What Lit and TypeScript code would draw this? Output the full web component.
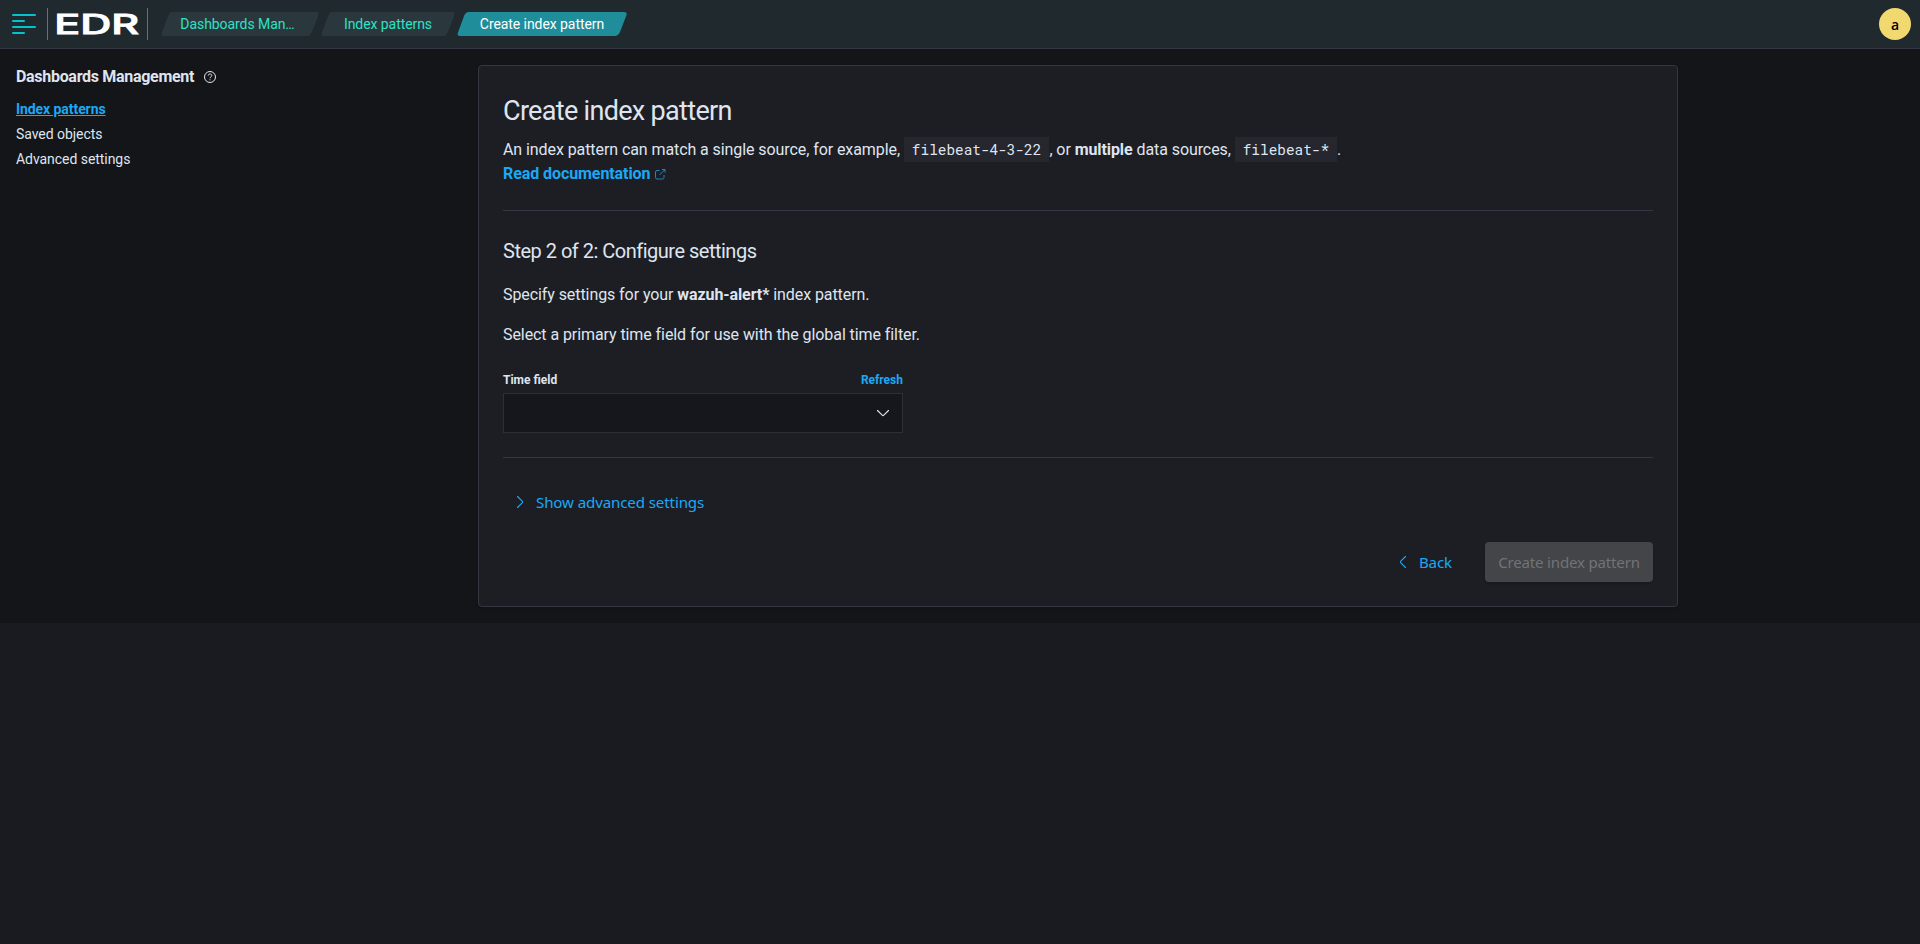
import { LitElement, html, css, svg } from "lit";
import { customElement } from "lit/decorators.js";

const chevron = (d: string) => html`<svg width="16" height="16" viewBox="0 0 16 16" fill="none" stroke="currentColor" stroke-width="1.150" stroke-linecap="round" stroke-linejoin="round">${svg`<path d=${d}></path>`}</svg>`;

@customElement("app-header")
export class AppHeader extends LitElement {
  static styles = css`
    :host { display: flex; align-items: flex-start; height: 48px; border-bottom: 1px solid #343741; background: #1f292e; padding: 0 8px 0 12px; }
    .menu { width: 24px; height: 22px; margin-top: 13px; }
    .logo { box-sizing: border-box; width: 101px; height: 32px; margin: 8px 0 0 11px; border-left: 1px solid #1f8e9c; border-right: 1px solid #1f8e9c; }
    .logo svg { display: block; }
    .crumbs { display: flex; gap: 1px; margin: 12px 0 0 12.500px; }
    .crumb { box-sizing: border-box; position: relative; display: flex; justify-content: center; height: 24px; line-height: 24px; font-size: 14px; color: #2ce2c6; letter-spacing: -0.07px; }
    .crumb svg { position: absolute; inset: 0; }
    .crumb span { position: relative; white-space: nowrap; }
    .c1 { width: 159px; padding-right: 5px; }
    .c2 { width: 135px; }
    .c3 { width: 171px; color: #fff; }
    .avatar { width: 32px; height: 32px; margin: 8px 1px 0 auto; border-radius: 50%; background: #f1d86f; color: #000; text-align: center; font: 600 14px/34px "Open Sans", sans-serif; }
  `;
  private crumb(cls: string, w: number, fill: string, text: string) {
    const d = `M11 0H${w - 4}Q${w - 0.5} 0 ${w - 1.5} 3L${w - 8} 20Q${w - 10} 24 ${w - 13} 24H3Q-.2 24 .8 21L7 4Q8.500 0 12 0Z`;
    return html`<div class="crumb ${cls}"><svg width=${w} height="24"><path d=${d} fill=${fill}></path></svg><span>${text}</span></div>`;
  }
  render() {
    return html`
      <svg class="menu" width="24" height="22" fill="#05c3c8"><rect y="1" width="24" height="2" rx="1"/><rect y="7" width="13" height="2" rx="1"/><rect y="13" width="24" height="2" rx="1"/><rect y="19" width="13" height="2" rx="1"/></svg>
      <div class="logo"><svg width="99" height="32"><text x="6.200" y="25.700" fill="#fff" stroke="#fff" stroke-width=".8" font-family="Inter, sans-serif" font-weight="500" font-size="26.500" textLength="85" lengthAdjust="spacingAndGlyphs">EDR</text></svg></div>
      <nav class="crumbs">
        ${this.crumb("c1", 159, "#2a383e", "Dashboards Man…")}
        ${this.crumb("c2", 135, "#2a383e", "Index patterns")}
        ${this.crumb("c3", 171, "#208d9b", "Create index pattern")}
      </nav>
      <div class="avatar">a</div>`;
  }
}

@customElement("side-nav")
export class SideNav extends LitElement {
  static styles = css`
    :host { display: block; padding-left: 16px; font-size: 14px; letter-spacing: -0.05px; }
    .title { display: flex; align-items: center; gap: 10px; height: 24px; margin-top: 15px; font-size: 16px; font-weight: 700; letter-spacing: -0.3px; white-space: nowrap; }
    .title svg { flex: none; margin-top: 2px; }
    .item { display: block; height: 25px; line-height: 25px; }
    .list { margin-top: 9px; }
    .active { color: #1ba9f5; font-weight: 700; text-decoration: underline; letter-spacing: -0.07px; }
  `;
  render() {
    return html`
      <div class="title"><span>Dashboards Management</span>
        <svg width="12" height="12" viewBox="0 0 12 12" fill="none" stroke="#dfe5ef"><circle cx="6" cy="6" r="5.500"></circle><path d="M4.200 4.600C4.200 2.400 7.800 2.400 7.800 4.500C7.800 5.800 6 5.700 6 7.200M6 8.300V9.300"></path></svg>
      </div>
      <div class="list">
        <a class="item active">Index patterns</a>
        <a class="item">Saved objects</a>
        <a class="item">Advanced settings</a>
      </div>`;
  }
}

@customElement("pattern-panel")
export class PatternPanel extends LitElement {
  static styles = css`
    :host { display: block; box-sizing: border-box; width: 1200px; height: 542px; padding: 24px; border: 1px solid #343741; border-radius: 4px; background: #1d1e24; font-size: 16px; line-height: 24px; letter-spacing: -0.08px; box-shadow: 0 2px 3px rgba(0,0,0,.15); }
    h1 { margin: 0; padding-top: 1px; font-size: 27px; font-weight: 400; line-height: 40px; letter-spacing: -0.68px; }
    h2 { margin: 0; font-size: 20px; font-weight: 400; line-height: 32px; letter-spacing: -0.5px; }
    p { margin: 16px 0 0; }
    p.intro { margin-top: 7px; }
    code { font: 14.4px "Roboto Mono", "Liberation Mono", monospace; letter-spacing: 0; background: #25262e; padding: 3.200px 8px; white-space: pre; }
    .link { color: #1ba9f5; font-weight: 700; }
    .doc { display: flex; align-items: center; gap: 5px; }
    .rule { height: 1px; margin: 24px 0; background: #343741; }
    .form { width: 400px; margin-top: 24px; }
    .row { display: flex; justify-content: space-between; font-size: 12px; font-weight: 700; line-height: 18px; letter-spacing: 0; }
    .select { box-sizing: border-box; display: flex; align-items: center; justify-content: flex-end; height: 40px; margin-top: 4px; padding-right: 11px; border: 1px solid #2d2f36; background: #16171c; }
    .seg { font-family: "Noto Sans", sans-serif; font-size: 15.100px; letter-spacing: -0.12px; color: #1ba9f5; }
    .adv { display: flex; align-items: center; gap: 8px; height: 40px; padding-left: 9px; }
    .actions { display: flex; justify-content: flex-end; align-items: center; height: 40px; margin-top: 20px; }
    .back { display: flex; align-items: center; gap: 8px; margin-right: 33px; }
    .btn { width: 168px; height: 40px; line-height: 40px; text-align: center; border-radius: 4px; background: #434548; color: #717376; letter-spacing: -0.2px; box-shadow: 0 2px 2px rgba(0,0,0,.15); }
  `;
  render() {
    return html`
      <h1>Create index pattern</h1>
      <p class="intro">An index pattern can match a single source, for example, <code>filebeat-4-3-22</code>, or <b>multiple</b> data sources, <code>filebeat-*</code>.</p>
      <div class="doc link"><span>Read documentation</span>
        <svg width="11" height="12" viewBox="0 0 11 12" fill="none" stroke="#1ba9f5" opacity=".75"><path d="M4.500 2.500H2Q.5 2.500 .5 4V9.500Q.5 11 2 11H7.500Q9 11 9 9.500V7M7 1.500H10V4.500M10 1.500L4.500 7"></path></svg>
      </div>
      <div class="rule"></div>
      <h2>Step 2 of 2: Configure settings</h2>
      <p>Specify settings for your <b>wazuh-alert*</b> index pattern.</p>
      <p>Select a primary time field for use with the global time filter.</p>
      <div class="form">
        <div class="row"><span>Time field</span><span class="link">Refresh</span></div>
        <div class="select">${chevron("M2.500 5.500L7.200 10.200Q8 11 8.800 10.200L13.500 5.500")}</div>
      </div>
      <div class="rule"></div>
      <div class="adv seg">${chevron("M5.500 2.500L10.200 7.200Q11 8 10.200 8.800L5.500 13.500")}<span>Show advanced settings</span></div>
      <div class="actions seg">
        <div class="back">${chevron("M10.500 2.500L5.800 7.200Q5 8 5.800 8.800L10.500 13.500")}<span>Back</span></div>
        <div class="btn">Create index pattern</div>
      </div>`;
  }
}

@customElement("app-root")
export class AppRoot extends LitElement {
  static styles = css`
    :host { display: block; height: 944px; overflow: hidden; background: #1a1b20; color: #dfe5ef; font-family: Roboto, sans-serif; }
    .body { display: grid; grid-template-columns: 478px 1200px; height: 574px; background: #141519; }
    .panel { margin-top: 16px; }
  `;
  render() {
    return html`<app-header></app-header><main class="body"><side-nav></side-nav><pattern-panel class="panel"></pattern-panel></main>`;
  }
}
